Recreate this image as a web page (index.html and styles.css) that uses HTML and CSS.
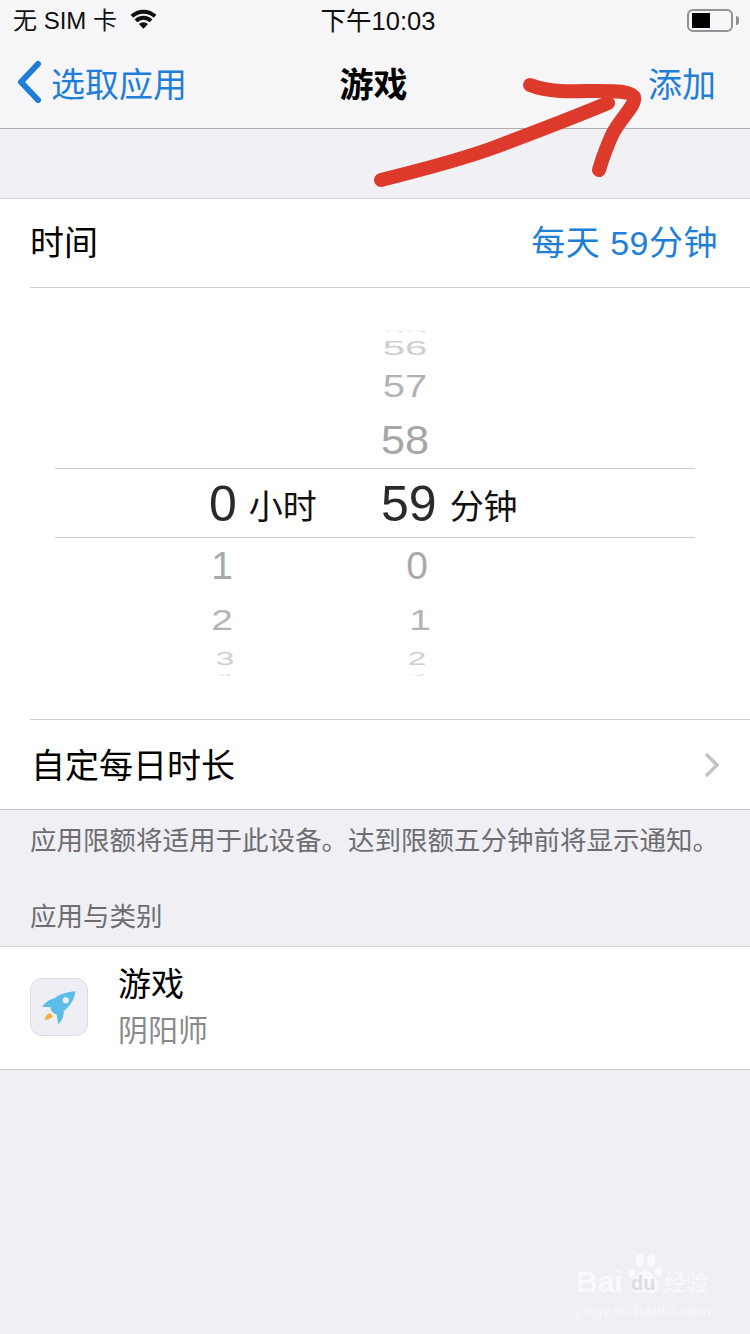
FILE: index.html
```html
<!DOCTYPE html>
<html lang="zh">
<head>
<meta charset="utf-8">
<title>游戏</title>
<link rel="stylesheet" href="styles.css">
</head>
<body>
<div class="phone">
  <header class="top">
    <div class="status">
      <div class="status-left">
        <span>无 SIM 卡</span>
        <svg class="wifi" viewBox="0 0 28 20"><path class="wifi-dot" d="M14 20 9.300 15.300a6.600 6.600 0 0 1 9.400 0Z"/><path class="wifi-arc" d="M6.200 12A11 11 0 0 1 21.800 12"/><path class="wifi-arc" d="M2 7.200A17.500 17.500 0 0 1 26 7.200"/></svg>
      </div>
      <div class="status-time">下午10:03</div>
      <div class="status-right">
        <div class="battery"><div class="battery-fill"></div></div>
        <div class="battery-nub"></div>
      </div>
    </div>
    <nav class="nav">
      <div class="nav-back">
        <svg class="chevron" viewBox="0 0 28 44"><path d="M23 4 6 22l17 18" /></svg>
        <span>选取应用</span>
      </div>
      <div class="nav-title">游戏</div>
      <div class="nav-add">添加</div>
    </nav>
  </header>

  <div class="spacer"></div>

  <section class="group">
    <div class="row row-time">
      <span>时间</span>
      <span class="row-value">每天 59分钟</span>
    </div>
    <div class="picker">
      <div class="wheel">
        <div class="lead"></div>
        <div class="band">
          <div class="sel sel-h"><b>0</b><span>小时</span></div>
          <div class="sel sel-m"><b>59</b><span>分钟</span></div>
        </div>
        <div class="cols">
          <div class="col col-h">
            <div class="cell n1">1</div>
            <div class="cell n2">2</div>
            <div class="cell n3 nudge">3</div>
            <div class="cell n4 nudge">4</div>
          </div>
          <div class="col col-m">
            <div class="cell n1">0</div>
            <div class="cell n2 nudge">1</div>
            <div class="cell n3">2</div>
            <div class="cell n4">3</div>
          </div>
        </div>
        <div class="above">
          <div class="cell a4">55</div>
          <div class="cell a3">56</div>
          <div class="cell a2">57</div>
          <div class="cell a1">58</div>
        </div>
      </div>
    </div>
    <div class="row row-custom">
      <span>自定每日时长</span>
      <svg class="disclosure" viewBox="0 0 18 28"><path d="M3 3l11 11L3 25"/></svg>
    </div>
  </section>

  <p class="note">应用限额将适用于此设备。达到限额五分钟前将显示通知。</p>
  <p class="section-head">应用与类别</p>

  <section class="list">
    <div class="app-icon">
      <svg viewBox="0 0 58 58">
        <path class="rocket" d="M46 12.700C38 13.500 29 15.500 24 20.300 19.500 20.800 14.500 24.500 11.700 28.700L20.500 29.300C20 31 20.500 32.500 21.500 33.500 22.500 35 24.500 36.300 26.500 36.800L28.300 47C32 43.500 34.500 38 33.800 33.500 39.500 29 45 22 46 12.700Z"/>
        <circle class="rocket-hole" cx="36" cy="22" r="3.200"/>
        <path class="flame" d="M14.300 42.700C14.500 38.500 17 35.500 20 35.300L22.700 38.700C20.500 41.300 17.500 42.700 14.300 42.700Z"/>
      </svg>
    </div>
    <div class="app-text">
      <div class="app-name">游戏</div>
      <div class="app-sub">阴阳师</div>
    </div>
  </section>

  <div class="watermark">
    <div class="wm-line">
      <span class="wm-bai">Bai</span>
      <div class="wm-paw">
        <svg class="paw" viewBox="0 0 34 42"><ellipse cx="4.500" cy="20" rx="3.500" ry="4.500"/><ellipse cx="12" cy="7" rx="4" ry="6"/><ellipse cx="23" cy="7" rx="4" ry="6"/><ellipse cx="30" cy="18" rx="3.500" ry="5"/><path d="M17 17c5 0 7 4 11 8 4 5 2 13-5 13-2 0-4-1-6-1s-4 1-6 1c-7 0-9-8-5-13 4-4 6-8 11-8Z"/></svg>
        <span class="wm-du">du</span>
      </div>
      <span class="wm-cn">经验</span>
    </div>
    <div class="wm-url">jingyan.baidu.com</div>
  </div>

  <svg class="scribble" viewBox="0 0 750 200">
    <path d="M381 180C420 170 450 163 490 149 530 134 570 119 608 103"/>
    <path d="M530 85C550 93 575 91 600 91 615 91 630 91 634 97 636 106 620 118 612 135 606 148 602 160 599 170"/>
  </svg>
</div>
</body>
</html>
```
FILE: styles.css
```css
* { box-sizing: border-box; }
html, body { margin: 0; padding: 0; }
body {
  width: 750px;
  height: 1334px;
  overflow: hidden;
  background: #efeff4;
  font-family: "Liberation Sans", "Noto Sans CJK SC", sans-serif;
  color: #000;
}
.phone { position: relative; width: 750px; height: 1334px; overflow: hidden; }

/* top bars */
.top { background: #f6f6f9; border-bottom: 1px solid #acacb0; height: 129px; }
.status {
  height: 40px;
  display: grid;
  grid-template-columns: 1fr auto 1fr;
  align-items: center;
  padding: 0 11px 4px 13px;
  font-size: 25px;
  color: #111;
}
.status-left { display: flex; align-items: center; gap: 13px; font-size: 24px; }
.wifi { width: 27px; height: 20px; margin-top: 0; }
.wifi-dot { fill: #111; }
.wifi-arc { fill: none; stroke: #111; stroke-width: 4.200; }
.status-time { font-size: 25.500px; margin-left: 4px; }
.status-right { display: flex; align-items: center; justify-content: flex-end; gap: 3px; padding-top: 4px; }
.battery { width: 46px; height: 23px; border: 2px solid #929294; border-radius: 6px; padding: 2px 3px; }
.battery-fill { width: 18px; height: 100%; background: #000; }
.battery-nub { width: 3px; height: 9px; background: #929294; border-radius: 0 3px 3px 0; }

.nav {
  height: 88px;
  display: grid;
  grid-template-columns: 1fr auto 1fr;
  align-items: center;
  padding: 0 18px 4px 15px;
  color: #1f7fd8;
  font-size: 34px;
}
.nav-back { display: flex; align-items: center; gap: 8px; }
.chevron { width: 28px; height: 44px; fill: none; stroke: #1f7fd8; stroke-width: 6; stroke-linecap: round; stroke-linejoin: round; }
.nav-title { color: #000; font-weight: 700; font-size: 34px; }
.nav-add { justify-self: end; margin-right: 16px; }

.spacer { height: 70px; border-bottom: 1px solid #d4d4d8; background: #f0f0f5; }

/* main group */
.group { background: #fff; border-bottom: 1px solid #c8c8cc; }
.row {
  margin-left: 30px;
  display: flex;
  align-items: center;
  justify-content: space-between;
  font-size: 34px;
}
.row-time { height: 89px; border-bottom: 1px solid #cfcfd2; padding: 0 32px 6px 0; }
.row-value { color: #1f7fd8; letter-spacing: .5px; }
.row-custom { height: 90px; border-top: 1px solid #cfcfd2; padding: 0 29px 2px 1px; }
.disclosure { width: 18px; height: 28px; margin-top: 2px; fill: none; stroke: #c3c3c7; stroke-width: 3.500; }

/* picker */
.picker { height: 431px; padding-top: 40px; }
.wheel { position: relative; height: 352px; overflow: hidden; }
.cell { line-height: 1; }
.lead { height: 140px; }
.band {
  margin: 0 55px;
  height: 70px;
  border-top: 1px solid #cdcdd0;
  border-bottom: 1px solid #cdcdd0;
  position: relative;
}
.sel { position: absolute; top: 9px; display: flex; align-items: baseline; font-size: 34px; color: #111; line-height: 52px; }
.sel b { font-weight: 400; font-size: 50px; color: #2a2a2a; }
.sel span { transform: translateY(-2px); }
.sel-h { left: 154px; gap: 12px; }
.sel-m { left: 326px; gap: 13px; }

.cols { position: absolute; top: 211px; left: 0; right: 0; height: 141px; }
.col { position: absolute; top: 0; width: 80px; text-align: center; color: #a9a9ab; }
.col-h { left: 182px; }
.col-m { left: 377px; }
.n1 { height: 54px; font-size: 39px; line-height: 54px; }
.n2 { height: 54px; font-size: 39px; line-height: 54px; transform: scaleY(.75); color: #b4b4b6; }
.n3 { height: 24px; margin-top: -1px; font-size: 34px; line-height: 24px; transform: scaleY(.55); color: #cfcfd1; }
.n4 { height: 10px; overflow: hidden; font-size: 30px; line-height: 14px; transform: scaleY(.22); color: #dedee0; }
.col .nudge { position: relative; left: 3px; }

.above { position: absolute; top: 0; left: 365px; width: 80px; text-align: center; }
.a4 { height: 7px; overflow: hidden; font-size: 40px; line-height: 7px; color: #dedee0; transform: scaleY(.2); }
.a3 { height: 24px; margin-top: 1px; font-size: 40px; line-height: 24px; color: #cdcdcf; transform: scaleY(.52); }
.a2 { height: 34px; margin-top: 9px; font-size: 40px; line-height: 34px; color: #b2b2b4; transform: scaleY(.8); }
.a1 { height: 38px; margin-top: 18px; font-size: 40px; line-height: 38px; color: #a6a6a8; transform: scaleX(1.08); }

/* below */
.note { margin: 0; padding: 16px 0 0 30px; height: 76px; font-size: 26.500px; line-height: 30px; color: #6d6d72; white-space: nowrap; }
.section-head { margin: 0; padding: 16px 0 0 30px; height: 60px; font-size: 26.500px; line-height: 30px; color: #6d6d72; }
.list {
  height: 124px;
  background: #fff;
  border-top: 1px solid #d0d0d4;
  border-bottom: 1px solid #c8c8cc;
  display: flex;
  align-items: center;
  padding-left: 30px;
  gap: 30px;
}
.app-icon { width: 58px; height: 58px; margin-top: -2px; background: #eeeff4; border: 1px solid #dcdce0; border-radius: 12px; }
.app-icon svg { display: block; width: 56px; height: 56px; }
.rocket { fill: #5cbde6; }
.rocket-hole { fill: #eeeff4; }
.flame { fill: #eeb64b; }
.app-text { display: flex; flex-direction: column; gap: 4px; margin-top: -1px; }
.app-name { font-size: 33px; line-height: 42px; }
.app-sub { font-size: 30px; line-height: 42px; color: #8a8a8e; }

/* overlays */
.scribble {
  position: absolute;
  left: 0; top: 0;
  width: 750px; height: 200px;
  fill: none;
  stroke: #de3a2c;
  stroke-width: 14;
  stroke-linecap: round;
  stroke-linejoin: round;
}
.watermark { position: absolute; left: 576px; top: 1252px; color: #f9f9fc; }
.wm-line { display: flex; align-items: flex-end; height: 46px; }
.wm-bai { font-size: 30px; font-weight: 700; line-height: 32px; width: 50px; }
.wm-paw { position: relative; width: 36px; height: 46px; margin-left: 1px; }
.paw { display: block; width: 36px; height: 46px; fill: #f9f9fc; }
.wm-du { position: absolute; left: 4px; bottom: 4px; font-size: 20px; line-height: 22px; font-weight: 700; color: #dcdce2; }
.wm-cn { font-size: 22px; line-height: 30px; margin-left: 1px; }
.wm-url { font-size: 15.500px; letter-spacing: .6px; line-height: 20px; margin-top: 3px; color: #f7f7fa; }
```
